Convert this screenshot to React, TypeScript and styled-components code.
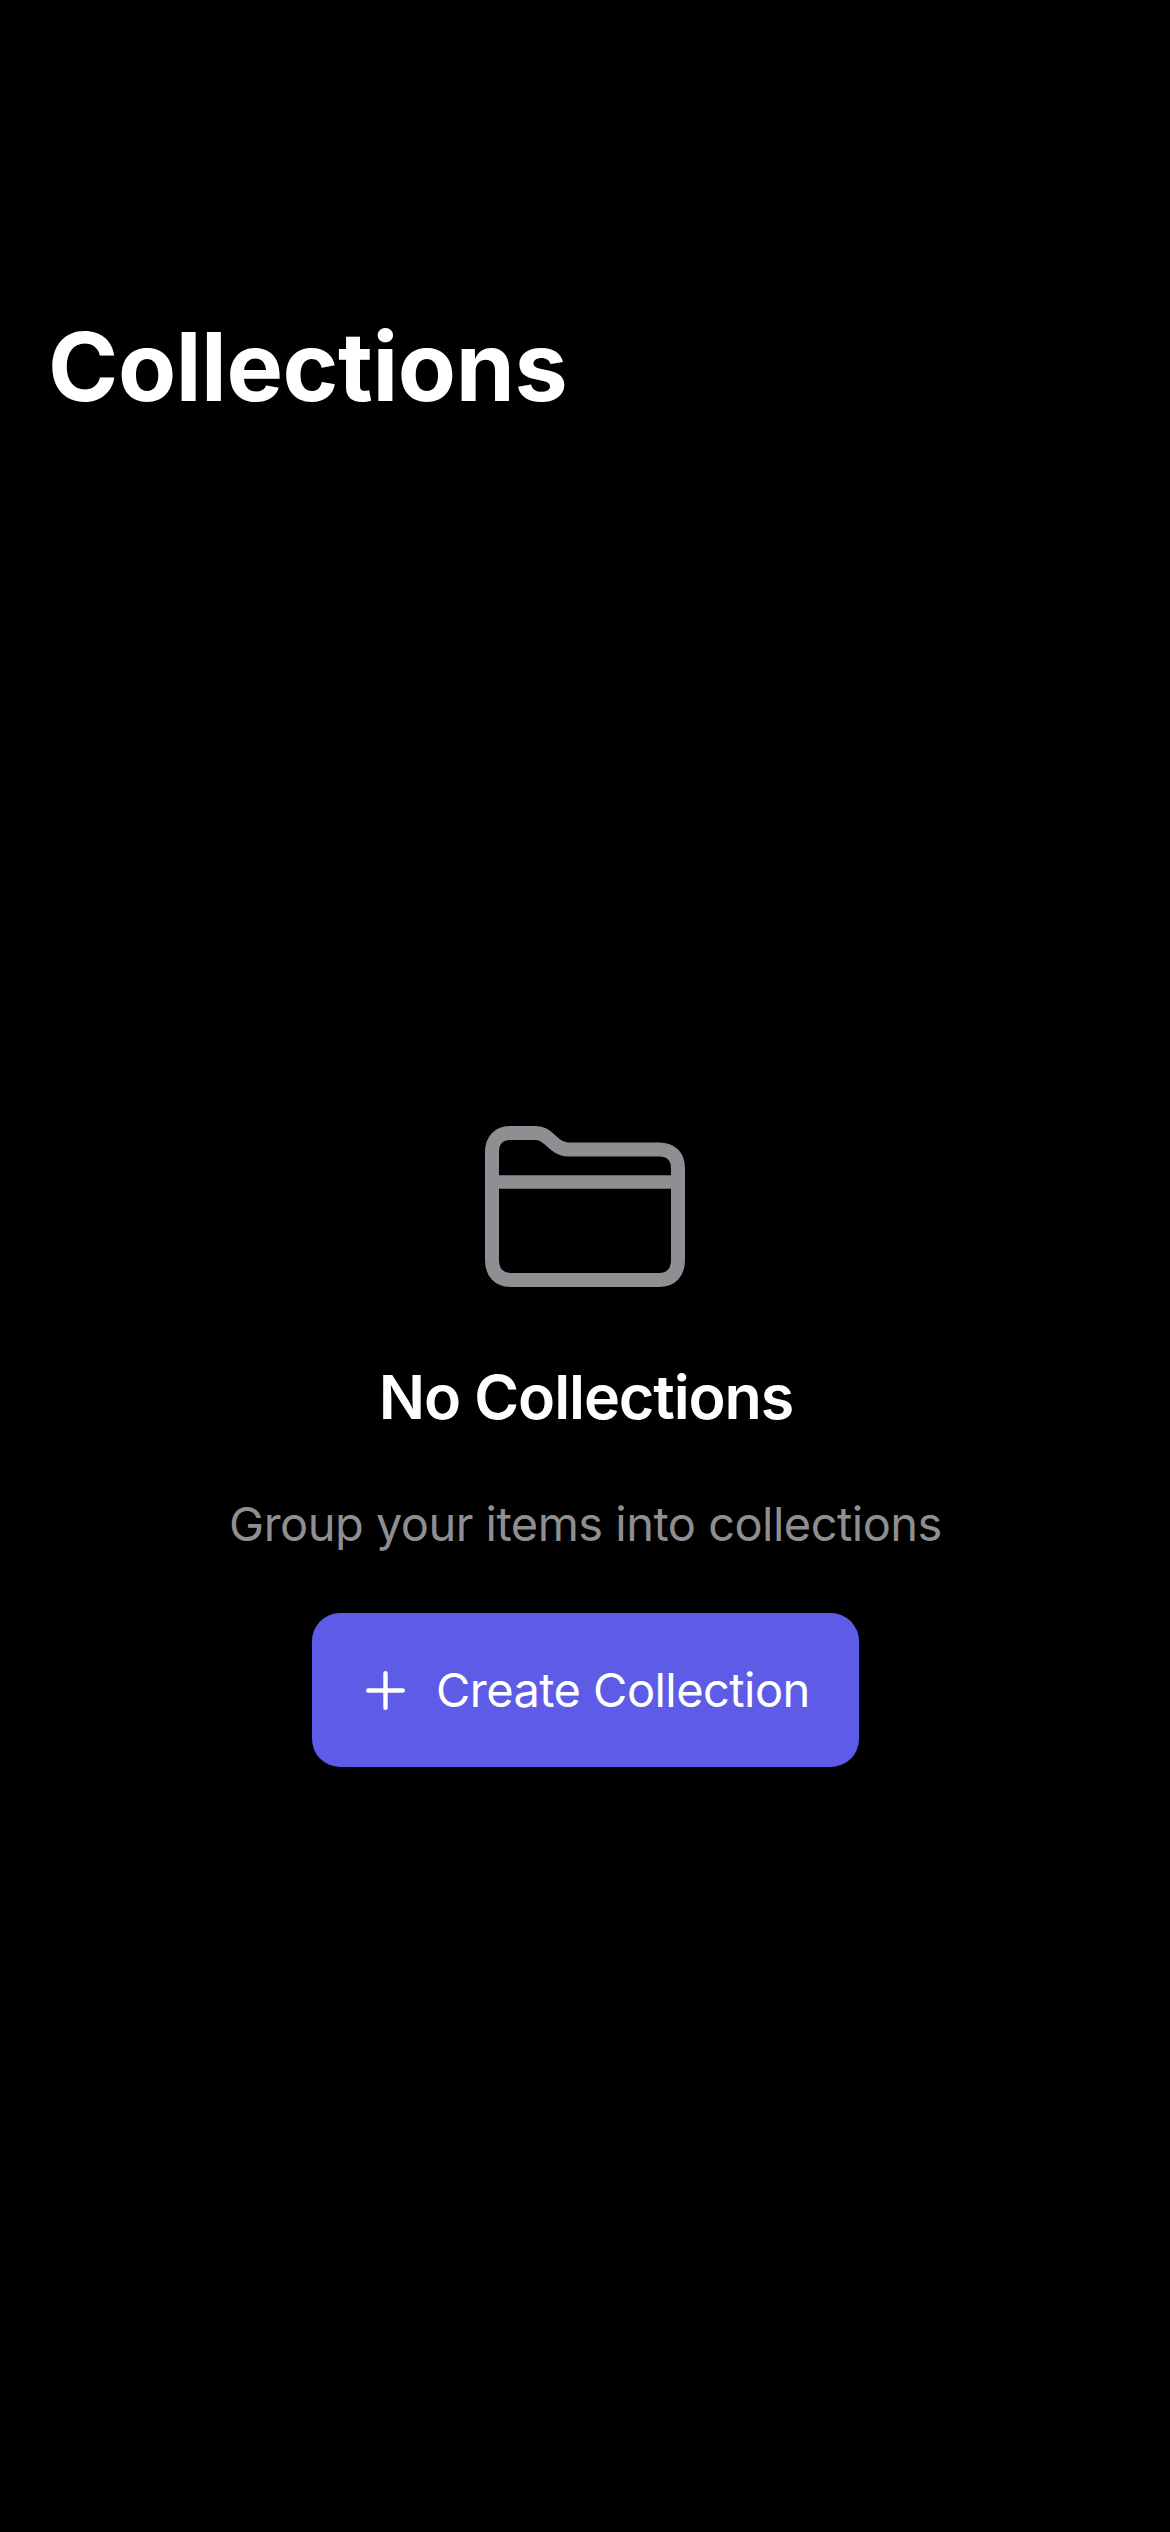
import React from "react";
import styled, { createGlobalStyle } from "styled-components";

const GlobalStyle = createGlobalStyle`
  * { box-sizing: border-box; }
  body { margin: 0; background: #000; }
`;

const Screen = styled.div`
  width: 1170px;
  height: 2532px;
  display: flex;
  flex-direction: column;
  background: #000;
  color: #fff;
  font-family: Inter, Roboto, "Liberation Sans", sans-serif;
`;

const Header = styled.header`
  padding: 307px 48px 0;
`;

const Title = styled.h1`
  margin: 0;
  font-size: 95px;
  line-height: 120px;
  font-weight: 700;
  letter-spacing: -0.4px;
  white-space: nowrap;
`;

const EmptyState = styled.main`
  display: flex;
  flex-direction: column;
  align-items: center;
  padding-top: 699px;
`;

const FolderIcon = styled.svg`
  display: block;
  width: 200px;
  height: 161px;
`;

const Heading = styled.h2`
  margin: 70px 0 0;
  padding-left: 2px;
  font-size: 61px;
  line-height: 80px;
  font-weight: 600;
  letter-spacing: -1.1px;
  white-space: nowrap;
`;

const Description = styled.p`
  margin: 57px 0 0;
  padding-left: 1px;
  font-size: 47px;
  line-height: 60px;
  letter-spacing: -0.53px;
  color: #8e8e93;
  white-space: nowrap;
`;

const CreateButton = styled.button`
  width: 547px;
  height: 154px;
  margin: 59px 0 0 1px;
  padding: 0 0 0 54px;
  display: flex;
  align-items: center;
  gap: 31px;
  border: 0;
  border-radius: 28px;
  background: #5e5ce6;
  color: #fff;
  font: 400 47px/60px Inter, Roboto, "Liberation Sans", sans-serif;
  white-space: nowrap;
`;

const PlusIcon = styled.svg`
  width: 39px;
  height: 39px;
  flex: none;
`;

const ButtonLabel = styled.span`
  letter-spacing: -0.56px;
`;

export default function App() {
  return (
    <Screen>
      <GlobalStyle />
      <Header>
        <Title>Collections</Title>
      </Header>
      <EmptyState>
        <FolderIcon viewBox="0 0 200 161" fill="none" stroke="#8e8e93" strokeWidth="14">
          <path d="M7 26C7 14 14 7 25 7H51C57 7 60 9.5 64 13L70 18.2C74.5 21.8 78 23.5 84 23.5H174C186 23.5 193 30 193 42V134C193 147 186 154 174 154H26C14 154 7 147 7 134Z" />
          <path d="M7 56H193" strokeWidth="13.4" />
        </FolderIcon>
        <Heading>No Collections</Heading>
        <Description>Group your items into collections</Description>
        <CreateButton>
          <PlusIcon viewBox="0 0 39 39" stroke="#fff" strokeWidth="4.4" strokeLinecap="round">
            <path d="M19.5 2.2V36.8M2.2 19.5H36.8" />
          </PlusIcon>
          <ButtonLabel>Create Collection</ButtonLabel>
        </CreateButton>
      </EmptyState>
    </Screen>
  );
}
